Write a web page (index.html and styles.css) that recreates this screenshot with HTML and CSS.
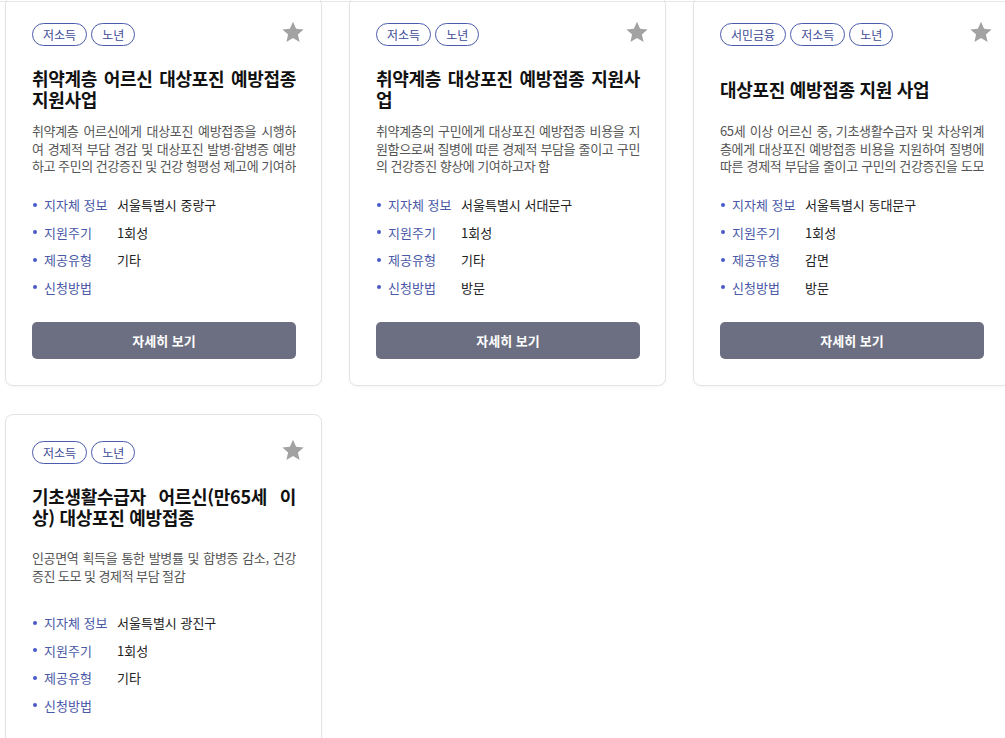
FILE: index.html
```html
<!DOCTYPE html>
<html lang="ko">
<head>
  <meta charset="UTF-8">
  <meta name="viewport" content="width=device-width, initial-scale=1.0">
  <title>대상포진 예방접종 지원</title>
  <link rel="stylesheet" href="styles.css">
</head>
<body>
  <div class="top-line"></div>
  <div class="list">

    <div class="card">
      <div class="tags">
        <span class="tag">저소득</span>
        <span class="tag">노년</span>
      </div>
      <svg class="star" viewBox="0 0 24 24"><path d="M12 1.8l3.1 7 7.5.7-5.7 5 1.7 7.4L12 18l-6.6 3.9 1.7-7.4-5.7-5 7.5-.7z"/></svg>
      <h3 class="title">취약계층 어르신 대상포진 예방접종 지원사업</h3>
      <div class="desc"><p>취약계층 어르신에게 대상포진 예방접종을 시행하여 경제적 부담 경감 및 대상포진 발병·합병증 예방하고 주민의 건강증진 및 건강 형평성 제고에 기여하고자 함</p></div>
      <ul class="info">
        <li><span class="label">지자체 정보</span><span class="value">서울특별시 중랑구</span></li>
        <li><span class="label">지원주기</span><span class="value">1회성</span></li>
        <li><span class="label">제공유형</span><span class="value">기타</span></li>
        <li><span class="label">신청방법</span><span class="value"></span></li>
      </ul>
      <button class="btn">자세히 보기</button>
    </div>

    <div class="card">
      <div class="tags">
        <span class="tag">저소득</span>
        <span class="tag">노년</span>
      </div>
      <svg class="star" viewBox="0 0 24 24"><path d="M12 1.8l3.1 7 7.5.7-5.7 5 1.7 7.4L12 18l-6.6 3.9 1.7-7.4-5.7-5 7.5-.7z"/></svg>
      <h3 class="title">취약계층 대상포진 예방접종 지원사업</h3>
      <div class="desc"><p>취약계층의 구민에게 대상포진 예방접종 비용을 지원함으로써 질병에 따른 경제적 부담을 줄이고 구민의 건강증진 향상에 기여하고자 함</p></div>
      <ul class="info">
        <li><span class="label">지자체 정보</span><span class="value">서울특별시 서대문구</span></li>
        <li><span class="label">지원주기</span><span class="value">1회성</span></li>
        <li><span class="label">제공유형</span><span class="value">기타</span></li>
        <li><span class="label">신청방법</span><span class="value">방문</span></li>
      </ul>
      <button class="btn">자세히 보기</button>
    </div>

    <div class="card">
      <div class="tags">
        <span class="tag">서민금융</span>
        <span class="tag">저소득</span>
        <span class="tag">노년</span>
      </div>
      <svg class="star" viewBox="0 0 24 24"><path d="M12 1.8l3.1 7 7.5.7-5.7 5 1.7 7.4L12 18l-6.6 3.9 1.7-7.4-5.7-5 7.5-.7z"/></svg>
      <h3 class="title">대상포진 예방접종 지원 사업</h3>
      <div class="desc"><p>65세 이상 어르신 중, 기초생활수급자 및 차상위계층에게 대상포진 예방접종 비용을 지원하여 질병에 따른 경제적 부담을 줄이고 구민의 건강증진을 도모하고자 함</p></div>
      <ul class="info">
        <li><span class="label">지자체 정보</span><span class="value">서울특별시 동대문구</span></li>
        <li><span class="label">지원주기</span><span class="value">1회성</span></li>
        <li><span class="label">제공유형</span><span class="value">감면</span></li>
        <li><span class="label">신청방법</span><span class="value">방문</span></li>
      </ul>
      <button class="btn">자세히 보기</button>
    </div>

    <div class="card">
      <div class="tags">
        <span class="tag">저소득</span>
        <span class="tag">노년</span>
      </div>
      <svg class="star" viewBox="0 0 24 24"><path d="M12 1.8l3.1 7 7.5.7-5.7 5 1.7 7.4L12 18l-6.6 3.9 1.7-7.4-5.7-5 7.5-.7z"/></svg>
      <h3 class="title">기초생활수급자 어르신(만65세 이상) 대상포진 예방접종</h3>
      <div class="desc"><p>인공면역 획득을 통한 발병률 및 합병증 감소, 건강증진 도모 및 경제적 부담 절감</p></div>
      <ul class="info">
        <li><span class="label">지자체 정보</span><span class="value">서울특별시 광진구</span></li>
        <li><span class="label">지원주기</span><span class="value">1회성</span></li>
        <li><span class="label">제공유형</span><span class="value">기타</span></li>
        <li><span class="label">신청방법</span><span class="value"></span></li>
      </ul>
      <button class="btn">자세히 보기</button>
    </div>

  </div>
</body>
</html>
```

FILE: styles.css
```css
html {
  overflow: hidden;
}

body {
  margin: 0;
  padding: 0;
  font-family: "Noto Sans CJK KR", "Noto Sans", sans-serif;
  background-color: #fff;
  color: #222;
}

.top-line {
  position: fixed;
  top: 1px;
  left: 0;
  right: 0;
  height: 1px;
  background-color: #e6e6e6;
  z-index: 10;
}

.list {
  display: grid;
  grid-template-columns: repeat(3, 317px);
  gap: 28px 27px;
  margin-top: -4px;
  padding-left: 5px;
  width: 1010px;
}

.card {
  position: relative;
  border: 1px solid #e4e4e4;
  border-radius: 8px;
  padding: 26px 25px 26px 26px;
  background-color: #fff;
  box-shadow: 0 1px 3px rgba(0, 0, 0, 0.04);
}

.tags {
  display: flex;
  gap: 4px;
  height: 23px;
}

.tag {
  display: inline-flex;
  align-items: center;
  height: 23px;
  box-sizing: border-box;
  padding: 0 10px;
  border: 1px solid #4b5cae;
  border-radius: 12px;
  font-size: 12px;
  color: #3d4b97;
}

.star {
  position: absolute;
  top: 23px;
  right: 16px;
  width: 24px;
  height: 24px;
  fill: #a2a2a2;
}

.title {
  display: flex;
  align-items: center;
  height: 50px;
  margin: 18px 0 0;
  font-size: 18px;
  font-weight: 700;
  line-height: 21px;
  letter-spacing: -0.3px;
  color: #111;
  word-break: break-all;
  text-align: justify;
}

.desc {
  display: flex;
  align-items: center;
  height: 53px;
  margin-top: 8px;
}

.desc p {
  margin: 0;
  max-height: 52.5px;
  overflow: hidden;
  font-size: 13px;
  line-height: 17.5px;
  letter-spacing: -0.35px;
  word-spacing: -0.5px;
  color: #555;
  word-break: break-all;
  text-align: justify;
}

.info {
  list-style: none;
  margin: 16px 0 0;
  padding: 0;
}

.info li {
  display: flex;
  align-items: center;
  height: 27.5px;
  font-size: 13px;
}

.label {
  position: relative;
  width: 73px;
  padding-left: 12px;
  color: #4a58a8;
}

.label::before {
  content: "";
  position: absolute;
  left: 1px;
  top: 50%;
  width: 4px;
  height: 4px;
  margin-top: -2px;
  border-radius: 50%;
  background-color: #4a58c8;
}

.value {
  color: #222;
}

.btn {
  display: block;
  width: 100%;
  height: 37px;
  margin-top: 21px;
  border: none;
  border-radius: 5px;
  background-color: #6c6f81;
  color: #fff;
  font-family: inherit;
  font-size: 13px;
  font-weight: 700;
  cursor: pointer;
}
```
